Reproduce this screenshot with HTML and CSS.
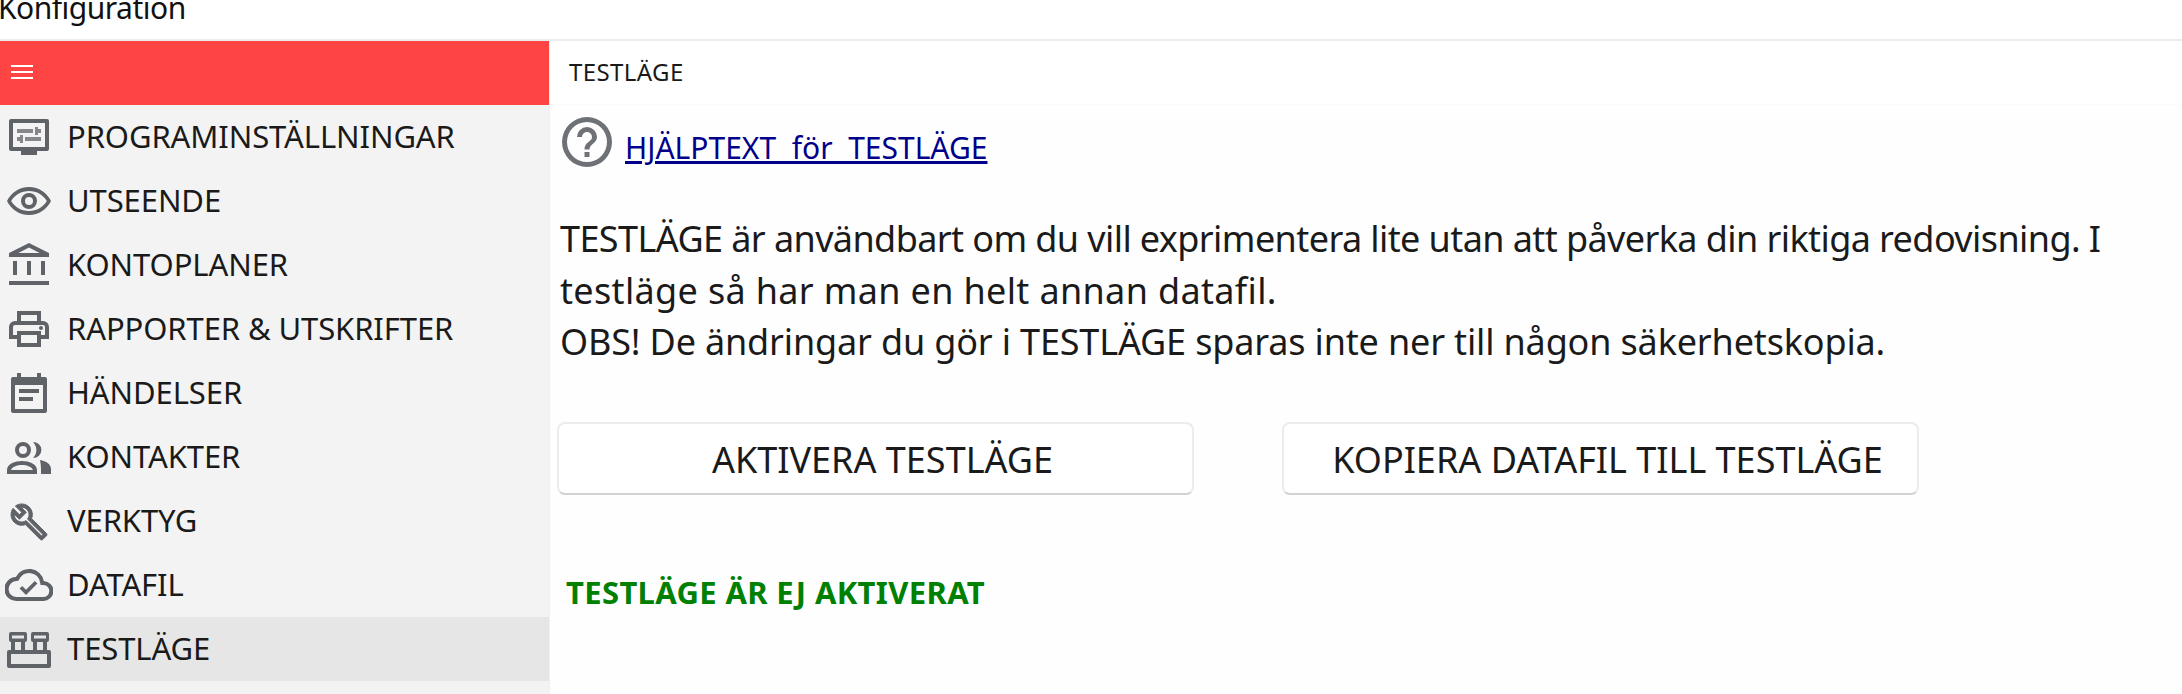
FILE: index.html
```html
<!DOCTYPE html>
<html lang="sv">
<head>
<meta charset="utf-8">
<title>Konfiguration</title>
<link rel="stylesheet" href="styles.css">
</head>
<body>
<header class="titlebar"><span class="title">Konfiguration</span></header>
<div class="app">
  <aside class="sidebar">
    <div class="menu-bar">
      <svg class="burger" viewBox="0 0 22 14"><path d="M0 1h22M0 7h22M0 13h22"/></svg>
    </div>
    <nav class="nav">
      <a class="nav-item"><svg class="icon" viewBox="0 0 24 24"><path d="M3 3h18a1 1 0 0 1 1 1v14a1 1 0 0 1-1 1h-5v2H8v-2H3a1 1 0 0 1-1-1V4a1 1 0 0 1 1-1zm1 2v12h16V5H4z"/><path class="soft" d="M6 8h8v2H6zM15 7h1.500v1H18v2h-1.500v1H15zM10 12h8v2h-8zM7.500 11H9v4H7.500v-1H6v-2h1.500z"/></svg><span>PROGRAMINSTÄLLNINGAR</span></a>
      <a class="nav-item"><svg class="icon" viewBox="0 0 24 24"><path d="M12 5C7 5 3 8 1 12c2 4 6 7 11 7s9-3 11-7c-2-4-6-7-11-7zm0 12c-3.900 0-7.200-2-8.900-5C4.800 9 8.100 7 12 7s7.200 2 8.900 5c-1.700 3-5 5-8.900 5z"/><path d="M12 8a4 4 0 1 0 0 8 4 4 0 0 0 0-8zm0 6a2 2 0 1 1 0-4 2 2 0 0 1 0 4z"/></svg><span>UTSEENDE</span></a>
      <a class="nav-item"><svg class="icon" viewBox="0 0 24 24"><path d="M12 1 2 6v2h20V6L12 1zm-5.300 5L12 3.300 17.300 6H6.700zM4 10h2v7H4zM11 10h2v7h-2zM18 10h2v7h-2zM2 20h20v2H2z"/></svg><span>KONTOPLANER</span></a>
      <a class="nav-item"><svg class="icon" viewBox="0 0 24 24"><path d="M19 8h-1V3H6v5H5a3 3 0 0 0-3 3v6h4v4h12v-4h4v-6a3 3 0 0 0-3-3zM8 5h8v3H8V5zm8 14H8v-4h8v4zm4-4h-2v-2H6v2H4v-4a1 1 0 0 1 1-1h14a1 1 0 0 1 1 1v4z"/><circle cx="18" cy="11.500" r="1"/></svg><span>RAPPORTER &amp; UTSKRIFTER</span></a>
      <a class="nav-item"><svg class="icon" viewBox="0 0 24 24"><path d="M20 4h-2V2h-2v2H8V2H6v2H4a1 1 0 0 0-1 1v16a1 1 0 0 0 1 1h16a1 1 0 0 0 1-1V5a1 1 0 0 0-1-1zm-1 16H5V8h14v12z"/><path d="M7 10h10v2H7zM7 14h7v2H7z"/></svg><span>HÄNDELSER</span></a>
      <a class="nav-item"><svg class="icon" viewBox="0 0 24 24"><path d="M9 4.500a4 4 0 1 0 0 8 4 4 0 0 0 0-8zm0 6a2 2 0 1 1 0-4 2 2 0 0 1 0 4z"/><path d="M8.500 14C5 14 1 15.500 1 18.500v2h15v-2c0-3-4-4.500-7.500-4.500zM3 18.500h11c-.5-1.500-3-2.500-5.500-2.500S3.500 17 3 18.500z"/><path d="M14 4.500a4.200 4 0 0 1 0 8c1-1 1.700-2.500 1.700-4S15 5.500 14 4.500zM17.500 13.500c3 .5 5.500 2 5.500 4.500v2.500h-5V18c0-1.500-.2-3-.5-4.500z"/></svg><span>KONTAKTER</span></a>
      <a class="nav-item"><svg class="icon" viewBox="0 0 24 24"><path class="wrench" transform="translate(2.200 2.650) scale(.82)" d="m22.610 18.990-9.080-9.080c.93-2.340.45-5.100-1.440-7C9.790.61 6.210.4 3.660 2.260L7.500 6.110 6.080 7.520 2.250 3.690C.39 6.230.6 9.820 2.900 12.110c1.860 1.860 4.570 2.350 6.890 1.480l9.110 9.110c.39.39 1.020.39 1.410 0l2.300-2.300c.4-.38.4-1.010 0-1.410zm-3 1.600-9.460-9.460c-.61.45-1.290.72-2 .82-1.360.2-2.790-.21-3.830-1.250C3.370 9.760 2.930 8.500 3 7.260l3.090 3.090 4.240-4.240-3.090-3.090c1.240-.07 2.490.37 3.440 1.310 1.080 1.080 1.490 2.570 1.240 3.960-.12.71-.42 1.370-.88 1.960l9.450 9.450-.88.88z"/></svg><span>VERKTYG</span></a>
      <a class="nav-item"><svg class="icon" viewBox="0 0 24 24"><path d="M19.400 10A7.500 7.500 0 0 0 5.400 8 6 6 0 0 0 6 20h13a5 5 0 0 0 .4-10zM19 18H6a4 4 0 0 1-.4-8l1.100-.1.500-.9a5.500 5.500 0 0 1 10.300 1.500l.3 1.500h1.500a3 3 0 0 1-.3 6z"/><path d="m10.500 17-3.200-3.200 1.300-1.300 1.900 1.900 4.400-4.400 1.300 1.300z"/></svg><span>DATAFIL</span></a>
      <a class="nav-item active"><svg class="icon" viewBox="0 0 24 24"><path d="M2 12.500h20a1 1 0 0 1 1 1v7a1 1 0 0 1-1 1H2a1 1 0 0 1-1-1v-7a1 1 0 0 1 1-1zm1 2v5h18v-5H3z"/><path d="M3 3.500h7a1 1 0 0 1 1 1v3a1 1 0 0 1-1 1v5H8V8.500H5v5H3v-5a1 1 0 0 1-1-1v-3a1 1 0 0 1 1-1zm.500 1.800v1.400h6V5.300h-6zM14 3.500h7a1 1 0 0 1 1 1v3a1 1 0 0 1-1 1v5h-2V8.500h-3v5h-2v-5a1 1 0 0 1-1-1v-3a1 1 0 0 1 1-1zm.500 1.800v1.400h6V5.300h-6z"/></svg><span>TESTLÄGE</span></a>
    </nav>
  </aside>
  <main class="main">
    <div class="page-head"><span>TESTLÄGE</span></div>
    <div class="content">
      <div class="help">
        <svg class="help-icon" viewBox="0 0 24 24"><path d="M12 2a10 10 0 1 0 0 20 10 10 0 0 0 0-20zm0 18a8 8 0 1 1 0-16 8 8 0 0 1 0 16z"/><path d="M11 16h2v2h-2zM12 6a4 4 0 0 0-4 4h2a2 2 0 1 1 4 0c0 2-3 1.800-3 5h2c0-2.300 3-2.500 3-5a4 4 0 0 0-4-4z"/></svg>
        <a class="help-link" href="#">HJÄLPTEXT&nbsp; för&nbsp; TESTLÄGE</a>
      </div>
      <p class="info"><span class="line-one">TESTLÄGE är användbart om du vill exprimentera lite utan att påverka din riktiga redovisning. I</span><br><span class="line-two">testläge så har man en helt annan datafil.</span><br><span class="line-three">OBS! De ändringar du gör i TESTLÄGE sparas inte ner till någon säkerhetskopia.</span></p>
      <div class="actions">
        <button class="btn">AKTIVERA TESTLÄGE</button>
        <button class="btn">KOPIERA DATAFIL TILL TESTLÄGE</button>
      </div>
      <div class="status">TESTLÄGE ÄR EJ AKTIVERAT</div>
    </div>
  </main>
</div>
</body>
</html>
```
FILE: styles.css
```css
* { box-sizing: border-box; }
html, body { margin: 0; height: 100%; overflow: hidden; background: #fff; }
body { font-family: "Noto Sans", "Open Sans", sans-serif; color: #1a1a1a; }
.titlebar { height: 41px; border-bottom: 2px solid #ececec; display: flex; align-items: flex-end; overflow: hidden; background: #fff; }
.title { font-size: 30px; line-height: 38px; margin: 0 0 12px -2px; letter-spacing: -0.5px; color: #111; }
.app { display: flex; height: 653px; }
.sidebar { width: 550px; flex: none; background: #f3f3f3; display: flex; flex-direction: column; border-right: 1px solid #f0f0f0; }
.menu-bar { height: 64px; background: #ff4444; display: flex; align-items: center; padding: 0 0 2px 11px; }
.burger { width: 22px; height: 14px; stroke: #fff; stroke-width: 2; fill: none; }
.nav { display: flex; flex-direction: column; }
.nav-item { height: 64px; display: flex; align-items: center; gap: 14px; padding-left: 5px; font-size: 31px; letter-spacing: -0.1px; color: #1a1a1a; }
.nav-item span { margin-bottom: 3px; }
.nav-item.active { background: #e6e6e6; }
.icon { width: 48px; height: 48px; flex: none; fill: #5f6368; fill-rule: evenodd; }
.soft { fill: #85878a; }
.wrench { stroke: #5f6368; stroke-width: 0.6; }
.main { flex: 1; background: #fefefe; display: flex; flex-direction: column; min-width: 0; }
.page-head { height: 64px; padding-left: 19px; display: flex; align-items: center; font-size: 24px; letter-spacing: 0.4px; background: #fff; border-bottom: 1px solid #fbfbfb; color: #1a1a1a; }
.page-head span { margin-bottom: 2px; }
.content { padding: 9px 0 0 7px; }
.help { display: flex; align-items: center; gap: 11px; height: 56px; }
.help-icon { width: 60px; height: 60px; flex: none; fill: #6e7175; margin-right: -3px; }
.help-link { font-size: 30px; color: #00008b; padding-top: 10px; }
.info { margin: 43px 0 0 3px; font-size: 36px; line-height: 51.500px; white-space: nowrap; color: #1a1a1a; }
.line-one { letter-spacing: -0.59px; }
.line-two { letter-spacing: 0.34px; }
.line-three { letter-spacing: -0.16px; }
.actions { display: flex; gap: 88px; margin-top: 54px; }
.btn { width: 637px; height: 73px; background: #fff; border: 2px solid #ececec; border-bottom-color: #d2d2d2; border-radius: 8px; font-family: inherit; font-size: 36px; color: #1a1a1a; padding: 3px 0 0 14px; }
.status { margin: 76px 0 0 9px; font-size: 31px; font-weight: 700; letter-spacing: 0.35px; color: #008000; }
```
